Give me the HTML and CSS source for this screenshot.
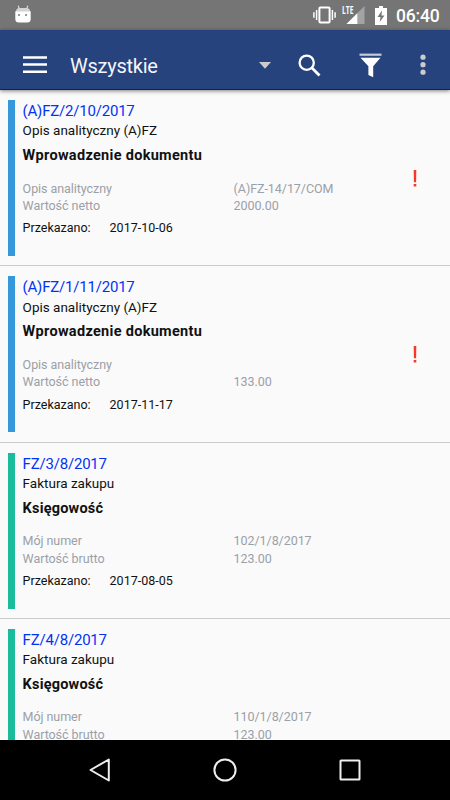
FILE: index.html
```html
<!DOCTYPE html>
<html lang="pl">
<head>
<meta charset="utf-8">
<title>Wszystkie</title>
<link rel="stylesheet" href="styles.css">
</head>
<body>
<div class="screen">
  <header class="status">
    <svg class="bot" width="16" height="18" viewBox="0 0 16 18"><path d="M3.2.7l1.5 4M12.8.7l-1.5 4" stroke="#ddd" stroke-width="1.1"/><path d="M1 6.500Q1 3 4.500 3h7Q15 3 15 6.500z" fill="#d4d4d4"/><path d="M.3 6.200h15.400V14q0 3.500-3.500 3.500H3.800Q.3 17.500.3 14z" fill="#fff"/><path d="M3 9h2v2H3zM10 9h2v2h-2z" fill="#999"/></svg>
    <svg class="vibrate" width="23" height="18" viewBox="0 0 23 18"><rect x="6.400" y="1.500" width="10.200" height="15" rx="1" fill="none" stroke="#fff" stroke-width="2"/><path d="M3.600 4v10M19.400 4v10M.9 6.300v5.400M22.100 6.300v5.400" stroke="#fff" stroke-width="1.500"/></svg>
    <div class="signal"><span class="lte">LTE</span><svg width="19" height="18" viewBox="0 0 19 18"><path d="M18.500 0v18H.5z" fill="#a3a3a3"/><path d="M11.300 7.200V18H.5z" fill="#fff"/></svg></div>
    <svg class="battery" width="12" height="19" viewBox="0 0 12 19"><path fill="#fff" d="M4 0h4v2h4v17H0V2h4z"/><path d="M7 4.500L2.500 11h3l-.8 5L9.500 9.500h-3z" fill="#757575"/></svg>
    <span class="clock">06:40</span>
  </header>
  <nav class="toolbar">
    <svg class="menu" width="24" height="18" viewBox="0 0 24 18"><path d="M0 1.500h24M0 8.500h24M0 15.800h24" stroke="#fff" stroke-width="2.400"/></svg>
    <h1 class="heading">Wszystkie</h1>
    <svg class="caret" width="12" height="7" viewBox="0 0 12 7"><path d="M0 0h12L6 6.800z" fill="#ccc"/></svg>
    <svg class="search" width="23" height="23" viewBox="0 0 23 23"><circle cx="8.700" cy="8.700" r="7.100" fill="none" stroke="#fff" stroke-width="2.300"/><path d="M13.800 13.800l7.700 7.700" stroke="#fff" stroke-width="2.800"/></svg>
    <svg class="filter" width="23" height="25" viewBox="0 0 23 25"><path d="M.5 1.700h22" stroke="#c3cbdc" stroke-width="2.200"/><path d="M1.500 4.800h20l-7.300 8.500v10.900l-4.800-2.300v-8.600z" fill="#fff"/></svg>
    <svg class="more" width="6" height="22" viewBox="0 0 6 22"><g fill="#ccc"><circle cx="3" cy="3.200" r="2.600"/><circle cx="3" cy="10.700" r="2.600"/><circle cx="3" cy="18.200" r="2.600"/></g></svg>
  </nav>
  <main class="list">
    <article class="card">
      <div class="stripe"></div>
      <div class="body">
        <h2 class="number">(A)FZ/2/10/2017</h2>
        <p class="type">Opis analityczny (A)FZ</p>
        <p class="stage">Wprowadzenie dokumentu</p>
        <div class="fields"><span>Opis analityczny</span><span>(A)FZ-14/17/COM</span><span>Wartość netto</span><span>2000.00</span></div>
        <p class="sent"><span>Przekazano:</span><span>2017-10-06</span></p>
      </div>
      <svg class="alert" width="4" height="17" viewBox="0 0 4 17"><path d="M.7 0h2.600l-.2 12.300H.9zM.7 13.900h2.600v2.500H.7z" fill="#f33a28"/></svg>
    </article>
    <article class="card">
      <div class="stripe"></div>
      <div class="body">
        <h2 class="number">(A)FZ/1/11/2017</h2>
        <p class="type">Opis analityczny (A)FZ</p>
        <p class="stage">Wprowadzenie dokumentu</p>
        <div class="fields"><span>Opis analityczny</span><span></span><span>Wartość netto</span><span>133.00</span></div>
        <p class="sent"><span>Przekazano:</span><span>2017-11-17</span></p>
      </div>
      <svg class="alert" width="4" height="17" viewBox="0 0 4 17"><path d="M.7 0h2.600l-.2 12.300H.9zM.7 13.900h2.600v2.500H.7z" fill="#f33a28"/></svg>
    </article>
    <article class="card green">
      <div class="stripe"></div>
      <div class="body">
        <h2 class="number">FZ/3/8/2017</h2>
        <p class="type">Faktura zakupu</p>
        <p class="stage tight">Księgowość</p>
        <div class="fields"><span>Mój numer</span><span>102/1/8/2017</span><span>Wartość brutto</span><span>123.00</span></div>
        <p class="sent"><span>Przekazano:</span><span>2017-08-05</span></p>
      </div>
    </article>
    <article class="card green">
      <div class="stripe"></div>
      <div class="body">
        <h2 class="number">FZ/4/8/2017</h2>
        <p class="type">Faktura zakupu</p>
        <p class="stage tight">Księgowość</p>
        <div class="fields"><span>Mój numer</span><span>110/1/8/2017</span><span>Wartość brutto</span><span>123.00</span></div>
      </div>
    </article>
  </main>
  <footer class="navbar">
    <svg width="24" height="26" viewBox="0 0 24 26"><path d="M20.800 2.500v21L2.500 13z"/></svg>
    <svg width="24" height="26" viewBox="0 0 24 26"><circle cx="12" cy="13" r="10.600"/></svg>
    <svg width="24" height="26" viewBox="0 0 24 26"><rect x="2.500" y="3.500" width="19" height="19" rx=".5"/></svg>
  </footer>
</div>
</body>
</html>
```
FILE: styles.css
```css
* { box-sizing: border-box; }
body { margin: 0; font-family: Roboto, sans-serif; }
h1, h2, p { margin: 0; font-weight: 400; }
svg { display: block; flex: none; }

.screen {
  width: 450px;
  height: 800px;
  display: flex;
  flex-direction: column;
  overflow: hidden;
  background: #fafafa;
}

.status {
  height: 30px;
  flex: none;
  display: flex;
  align-items: center;
  padding: 0 10px 0 15px;
  background: #757575;
  color: #fff;
}
.bot { margin-top: -3px; }
.vibrate { margin-left: auto; }
.signal { display: flex; width: 23px; height: 18px; margin-left: 6px; justify-content: flex-end; position: relative; }
.lte { position: absolute; left: 0; top: -1px; font: 700 10.500px/11px "Open Sans", sans-serif; transform: scaleX(.64); transform-origin: 0 0; }
.battery { margin-left: 10px; }
.clock { margin-left: 9px; width: 44px; padding-top: 2px; font-size: 17.500px; font-weight: 500; line-height: 30px; letter-spacing: -.2px; white-space: nowrap; }

.toolbar {
  height: 60px;
  flex: none;
  display: flex;
  align-items: center;
  padding: 11px 24px 0 23px;
  background: #26437d;
  border-bottom: 1px solid #0b2268;
  box-shadow: 0 1px 4px rgba(0, 0, 0, .5);
  z-index: 1;
}
.heading { margin-left: 23px; padding-top: 2px; font-size: 20px; line-height: 24px; letter-spacing: -.25px; color: #f4f5f8; }
.caret { margin-left: auto; margin-top: 1px; }
.search { margin-left: 27px; }
.filter { margin-left: 38px; }
.more { margin-left: 38px; }

.list { flex: 1; min-height: 0; overflow: hidden; }
.card {
  height: 176.250px;
  display: flex;
  padding: 10px 33px 9px 8px;
  border-bottom: 1.500px solid #ccc;
}
.stripe { width: 7px; height: 156px; background: #3498db; flex: none; }
.green .stripe { background: #1abc9c; }
.body { flex: 1; padding-left: 7.600px; color: #111; }
.number { font-size: 15px; line-height: 22px; letter-spacing: -.2px; color: #0432f5; }
.type { margin-top: -.6px; font-size: 13.500px; line-height: 18px; }
.stage { margin-top: 6.600px; font-size: 14.500px; line-height: 20px; font-weight: 700; letter-spacing: .3px; }
.tight { letter-spacing: .2px; }
.fields {
  display: grid;
  grid-template-columns: 211px 1fr;
  grid-auto-rows: 17.500px;
  margin-top: 13.500px;
  font-size: 12.500px;
  line-height: 17.500px;
  letter-spacing: -.06px;
  color: #9aa0a8;
}
.sent { display: flex; margin-top: 4.800px; font-size: 12.500px; line-height: 18px; }
.sent span:first-child { width: 87px; }
.alert { margin-top: 70px; }

.navbar {
  height: 60px;
  flex: none;
  display: flex;
  align-items: center;
  justify-content: center;
  gap: 101px;
  background: #000;
}
.navbar svg { fill: none; stroke: #eee; stroke-width: 2; stroke-linejoin: round; }
```
